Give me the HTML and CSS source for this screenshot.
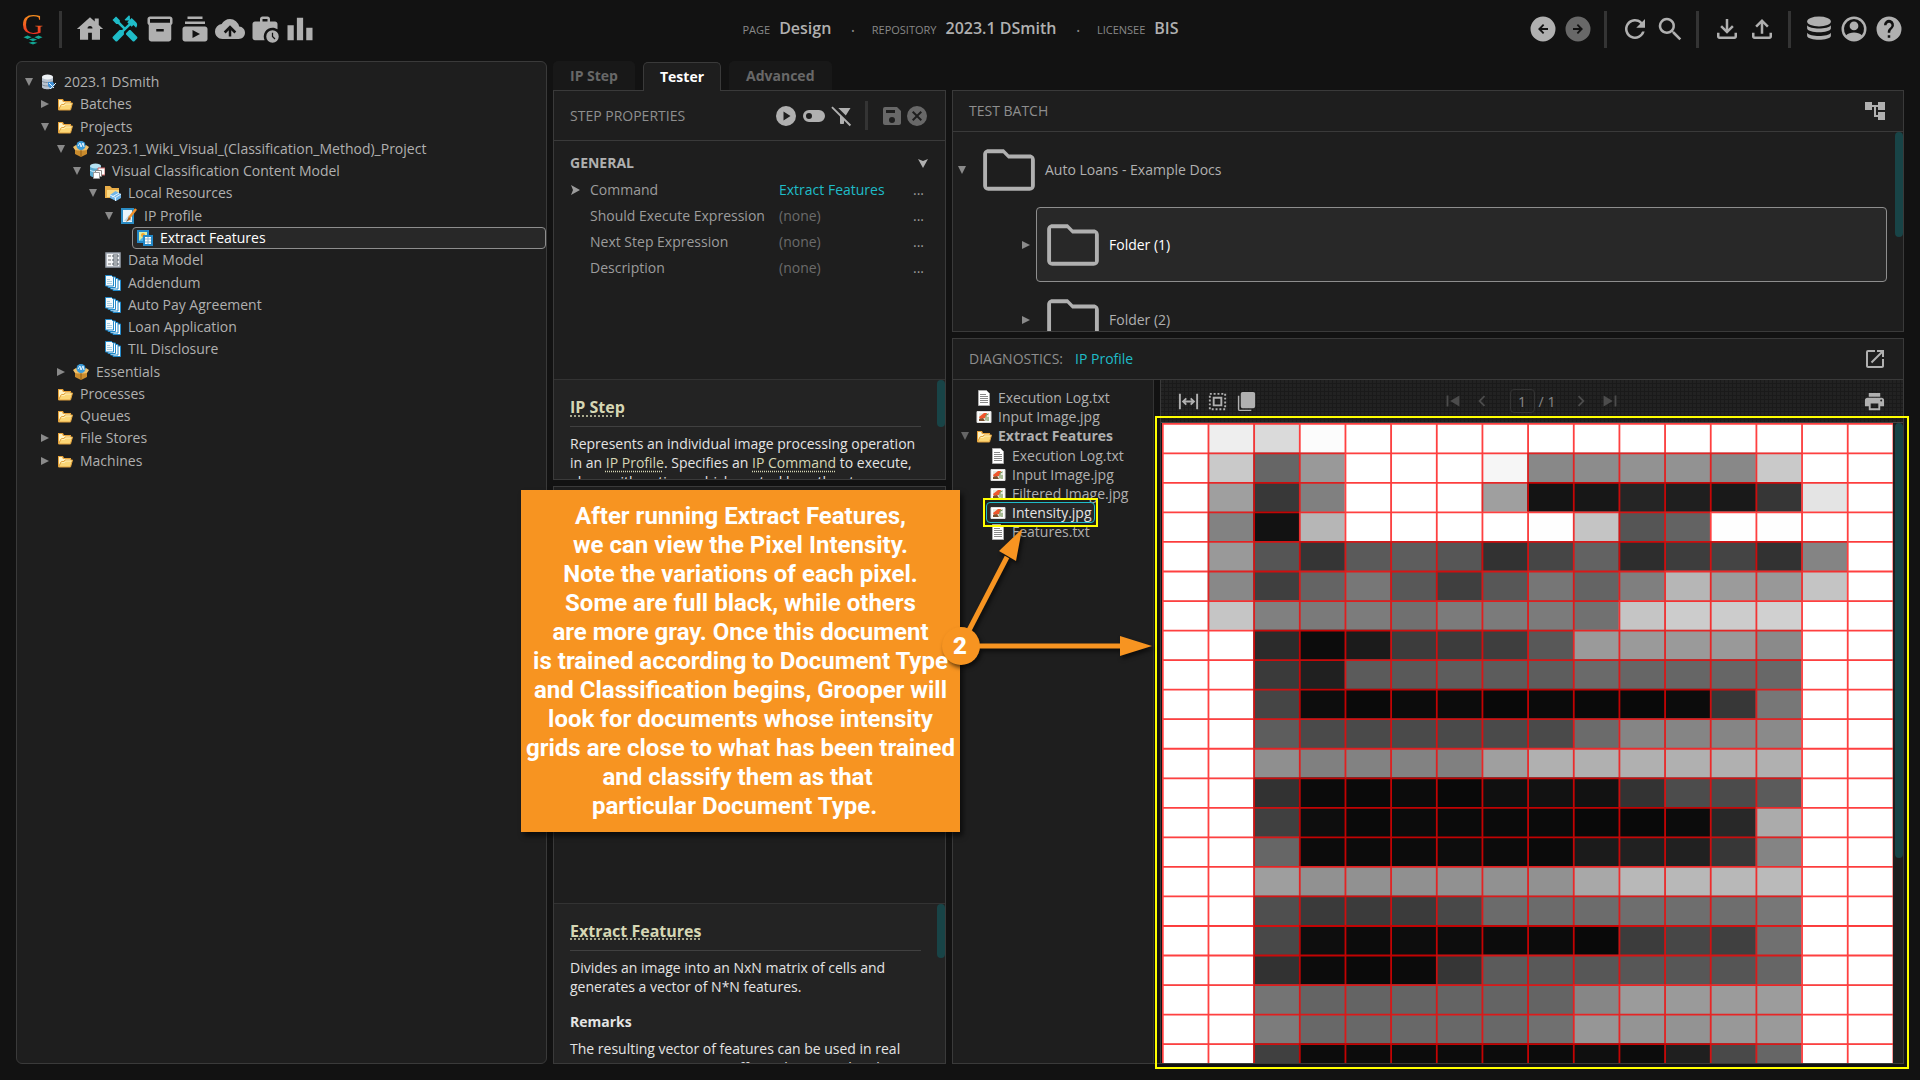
FILE: index.html
```html
<!DOCTYPE html>
<html lang="en">
<head>
<meta charset="utf-8">
<title>Grooper Design</title>
<link rel="stylesheet" href="styles.css">
</head>
<body>
<svg class="defs" aria-hidden="true">
  <defs>
    <linearGradient id="gold" x1="0" y1="0" x2="0" y2="1"><stop offset="0" stop-color="#fff0a8"/><stop offset="1" stop-color="#f5c04e"/></linearGradient>
    <symbol id="folder" viewBox="0 0 16 16"><path d="M1 14V3h5l1 2h7v3" fill="#e8a33a"/><path d="M2 4h3l1 2h7v2H5l-3 5z" fill="#fff3c4"/><path d="M1.500 14L4 9l3-.5 1-1.500h7.500l-2 7z" fill="#fbd676" stroke="#e0a03c"/><path d="M4.500 9.500h3l1-1.500h6" fill="none" stroke="#fff0b8"/></symbol>
    <symbol id="db" viewBox="0 0 16 16"><path d="M1 3v10c0 3 11 3 11 0V3" fill="#b9c3cf"/><ellipse cx="6.500" cy="3" rx="5.500" ry="2.500" fill="#eef2f6"/><path d="M1 7c1 2 10 2 11 0M1 10.500c1 2 10 2 11 0" stroke="#7c8a9a" fill="none"/><path d="M7 8l5 0 2 3-4 4-3-3z" fill="#3d8fd6"/><path d="M9 15l6-6M8 9l5 5" stroke="#e8f3fc"/></symbol>
    <symbol id="box" viewBox="0 0 16 16"><path d="M2 8l6 2 6-2v5l-6 3-6-3z" fill="#c98b2d"/><path d="M0 6l3-2 5 3 5-3 3 2-2 3-6 1-6-1z" fill="#f0c06a"/><path d="M8 9v7" stroke="#8d5a14"/><circle cx="8" cy="4.500" r="4.500" fill="#3b9bd8"/><path d="M5 5l2-3 1 4 2-4 1 4" stroke="#e9f6ff" fill="none"/></symbol>
    <symbol id="model" viewBox="0 0 16 16"><path d="M1 3v9c0 3 11 3 11 0V3" fill="#58a9cf"/><ellipse cx="6.500" cy="3" rx="5.500" ry="2.500" fill="#b5e2f3"/><path d="M1 7c1 2 10 2 11 0" stroke="#d9f2fb" fill="none"/><path d="M9 5h7v7H9z" fill="#fff" stroke="#c66"/><path d="M6.500 7.500h6v6h-6z" fill="#fff" stroke="#888"/><path d="M4.500 9.500h6v6h-6z" fill="#fff" stroke="#999"/></symbol>
    <symbol id="resources" viewBox="0 0 16 16"><path d="M0 13V1h5l2 2h7v10z" fill="#e9ad48"/><path d="M2 5h12v7H2z" fill="#fbd982"/><path d="M5 10l5.500-4L16 9v4l-5 3-6-3z" fill="#70b5e8"/><path d="M5 10l5.500 2.500L16 9M10.500 12.500V16M7 12l7-4" stroke="#e6f5ff" fill="none"/></symbol>
    <symbol id="profile" viewBox="0 0 16 16"><path d="M1 1h11v14H1z" fill="#e8f5fc" stroke="#2b8cc4" stroke-width="2"/><path d="M3 13l5-6 3 6z" fill="#b9d8ea"/><path d="M15 1L8 10" stroke="#f0902a" stroke-width="2.500"/><path d="M8 9l-3 5 5-3z" fill="#a35a1c"/></symbol>
    <symbol id="extract" viewBox="0 0 16 16"><path d="M1 1h10v11H1z" fill="#d8f0a8" stroke="#2389c9" stroke-width="2"/><circle cx="6" cy="5" r="2" fill="#f3a52c"/><path d="M2 11l4-4 3 4z" fill="#4bb3e3"/><path d="M7 6h8v9H7z" fill="#fff" stroke="#2389c9" stroke-width="2"/><path d="M8 9h6M8 12h6M11 7v7" stroke="#8db6cc"/></symbol>
    <symbol id="data" viewBox="0 0 16 16"><path d="M1 1h14v14H1z" fill="#f4f6f8" stroke="#9aa3ad" stroke-width="1.500"/><path d="M3 4h3M3 8h3M3 12h3" stroke="#777"/><path d="M8 3h5v2H8zM8 7h5v2H8zM8 11h5v2H8z" fill="#fff" stroke="#4d5661"/></symbol>
    <symbol id="docs" viewBox="0 0 16 16"><path d="M8 5h7.500v10.500H8z" fill="#fff" stroke="#2389c9"/><path d="M5.500 3.500h7.500V14H5.500z" fill="#fff" stroke="#2389c9"/><path d="M3 2h7.500v10.500H3z" fill="#fff" stroke="#2389c9"/><path d="M.500.500h6l2 2V11h-8z" fill="#f4fafd" stroke="#2389c9"/><path d="M2 4.500h3M2 6.500h5M2 8.500h5" stroke="#a9cfe2"/></symbol>
    <symbol id="text" viewBox="0 0 16 16"><path d="M2.500.500h8l3 3v12h-11z" fill="#fff" stroke="#aaa"/><path d="M4 4.500h6M4 6.500h8M4 8.500h8M4 10.500h8M4 12.500h8" stroke="#888"/></symbol>
    <symbol id="picture" viewBox="0 0 16 16"><path d="M1 2.500h14v11H1z" fill="#fff" stroke="#ddd"/><path d="M3 12V4h10v8z" fill="#e5e9df"/><path d="M3 8l5-4h3l-2 5-5 1z" fill="#f0562c"/><path d="M3 12v-2l4-1 2 3z" fill="#79502e"/><path d="M10 11.500V6l2.500-1M12 12V8" stroke="#6b8f4b" fill="none"/></symbol>
    <symbol id="bigfolder" viewBox="0 0 24 24"><path d="M20 6h-8l-2-2H4c-1.100 0-2 .9-2 2v12c0 1.100.9 2 2 2h16c1.100 0 2-.9 2-2V8c0-1.100-.9-2-2-2zm.5 12.500h-17v-13h6.200l2 2h8.800z"/></symbol>
    <symbol id="down" viewBox="0 0 10 10"><path d="M1 1h8L5 9z"/></symbol>
    <symbol id="right" viewBox="0 0 10 10"><path d="M1 1v8l8-4z"/></symbol>
  </defs>
</svg>

<header class="topbar">
  <nav class="tools" aria-label="Pages">
    <a class="logo" href="#" aria-label="Grooper"><span class="logo-letter">G</span><svg viewBox="0 0 22 10"><path d="M5 0l4.500 2L5 4 .5 2zM17 0l4.500 2L17 4l-4.500-2zM11 3l4.500 1.500L11 6.500 6.500 4.500zM11 7l5 1-5 2-5-2z" fill="#12a594"/></svg></a>
    <i class="bar"></i>
    <div class="group">
    <a href="#" aria-label="Home"><svg viewBox="0 0 24 24"><path d="M10.500 20.500v-5.500h3v5.500h6.500V12h2.500L19 8.700V3.500h-3.200v2.400L12 2.500 1.500 12H4v8.500zM10 11.500a2 2 0 0 1 4 0z"/></svg></a>
    <a class="active" href="#" aria-label="Design"><svg viewBox="0 0 24 24"><path d="M21.670 18.170l-5.300-5.300h-.99l-2.540 2.540v.99l5.300 5.300c.39.39 1.020.39 1.410 0l2.120-2.120c.39-.38.39-1.020 0-1.410zM17.340 10.190l1.410-1.410 2.120 2.120c1.170-1.170 1.170-3.070 0-4.240l-3.540-3.540-1.410 1.410V1.710L15.220 1l-3.540 3.540.71.71h2.830l-1.410 1.410 1.060 1.060-2.890 2.890-4.130-4.130V5.060L4.830 2.040 2 4.870 5.030 7.900h1.410l4.130 4.130-.85.850H7.600l-5.300 5.300c-.39.39-.39 1.020 0 1.410l2.120 2.120c.39.39 1.020.39 1.410 0l5.300-5.300v-2.120l5.150-5.150z"/></svg></a>
    <a href="#" aria-label="Batches"><svg viewBox="0 0 24 24"><path d="M20 2H4c-1 0-2 .9-2 2v3c0 .7.400 1.350 1 1.700V20c0 1.100 1.100 2 2 2h14c.9 0 2-.9 2-2V8.700c.6-.35 1-1 1-1.700V4c0-1.100-1-2-2-2zm-5 12H9v-2h6zm5-7H4V4h16z"/></svg></a>
    <a href="#" aria-label="Tasks"><svg viewBox="0 0 24 24"><path d="M20 8H4V6h16zm-2-6H6v2h12zm4 10v8c0 1.100-.9 2-2 2H4c-1.100 0-2-.9-2-2v-8c0-1.100.9-2 2-2h16c1.100 0 2 .9 2 2zm-6 4l-6-3.270v6.530z"/></svg></a>
    <a href="#" aria-label="Imports"><svg viewBox="0 0 24 24"><path d="M19.350 10.040A7.490 7.490 0 0 0 12 4C9.110 4 6.600 5.640 5.350 8.040A5.990 5.990 0 0 0 0 14c0 3.310 2.690 6 6 6h13c2.760 0 5-2.240 5-5 0-2.640-2.050-4.780-4.650-4.960zM13 13v5h-2v-5l-2.500 2.500L7 14l5-5 5 5-1.500 1.500z"/></svg></a>
    <a href="#" aria-label="Jobs"><svg viewBox="0 0 24 24"><path d="M18 11c1.490 0 2.870.47 4 1.260V8c0-1.110-.89-2-2-2h-4V4c0-1.110-.89-2-2-2h-4c-1.110 0-2 .89-2 2v2H4c-1.110 0-2 .89-2 2v11c0 1.110.89 2 2 2h7.680A7 7 0 0 1 18 11zm-8-7h4v2h-4z"/><path d="M18 13a5 5 0 1 0 0 10 5 5 0 0 0 0-10zm1.650 7.350L17.500 18.200V15h1v2.790l1.850 1.850z"/></svg></a>
    <a href="#" aria-label="Stats"><svg viewBox="0 0 24 24"><path d="M2 9h5v12H2zM9.500 3h5v18h-5zM17 11h5v10h-5z"/></svg></a>
    </div>
  </nav>
  <div class="crumbs">
    <span>PAGE</span><b>Design</b><em>•</em><span>REPOSITORY</span><b>2023.1 DSmith</b><em>•</em><span>LICENSEE</span><b>BIS</b>
  </div>
  <div class="tools tools-end">
    <div class="group">
    <button aria-label="Back"><svg viewBox="0 0 24 24"><path fill-rule="evenodd" d="M12 2a10 10 0 1 0 0 20 10 10 0 0 0 0-20zm0 6l1 1-2 2.200h5v1.600h-5L13 15l-1 1-4-4z"/></svg></button>
    <button class="dim" aria-label="Forward"><svg viewBox="0 0 24 24"><path fill-rule="evenodd" d="M12 2a10 10 0 1 0 0 20 10 10 0 0 0 0-20zm0 6l-1 1 2 2.200H8v1.600h5L11 15l1 1 4-4z"/></svg></button>
    </div><i class="bar"></i><div class="group">
    <button aria-label="Refresh"><svg viewBox="0 0 24 24"><path d="M17.650 6.350A8 8 0 1 0 19.730 14h-2.080A6 6 0 1 1 12 6c1.660 0 3.140.69 4.220 1.780L13 11h7V4z"/></svg></button>
    <button aria-label="Search"><svg viewBox="0 0 24 24"><path d="M15.500 14h-.79l-.28-.27A6.500 6.500 0 1 0 13.730 14.430l.27.28v.79l5.500 5.490L21 19.500zm-6 0a4.500 4.500 0 1 1 0-9 4.500 4.500 0 0 1 0 9z"/></svg></button>
    </div><i class="bar"></i><div class="group">
    <button aria-label="Download"><svg viewBox="0 0 24 24"><path d="M11 4h2v8l3-3 1.400 1.400L12 15.800l-5.400-5.400L8 9l3 3zM4 15h2v3h12v-3h2v3c0 1-.9 2-2 2H6c-1.100 0-2-1-2-2z"/></svg></button>
    <button aria-label="Upload"><svg viewBox="0 0 24 24"><path d="M11 15.800h2V7.800l3 3 1.400-1.400L12 4 6.600 9.400 8 10.800l3-3zM4 15h2v3h12v-3h2v3c0 1-.9 2-2 2H6c-1.100 0-2-1-2-2z"/></svg></button>
    </div><i class="bar"></i><div class="group">
    <button aria-label="Repository"><svg viewBox="0 0 24 24"><ellipse cx="12" cy="6" rx="9.500" ry="4"/><path d="M2.500 9c2 3.500 17 3.500 19 0v2.500c-1 4-18 4-19 0zM2.500 15c2 3.500 17 3.500 19 0v2.500c-1 4-18 4-19 0z"/></svg></button>
    <button aria-label="User"><svg viewBox="0 0 24 24"><path fill-rule="evenodd" d="M12 2a10 10 0 1 0 0 20 10 10 0 0 0 0-20zM5.700 17A8 8 0 1 1 18.300 17c-3-3-9.600-3-12.600 0zM12 6a3.500 3.500 0 1 1 0 7 3.500 3.500 0 0 1 0-7z"/></svg></button>
    <button aria-label="Help"><svg viewBox="0 0 24 24"><path d="M12 2a10 10 0 1 0 0 20 10 10 0 0 0 0-20zm1 17h-2v-2h2zm2.070-7.750l-.9.920C13.450 12.900 13 13.500 13 15h-2v-.5c0-1.100.45-2.100 1.170-2.830l1.240-1.260A2 2 0 1 0 10 9H8a4 4 0 1 1 7.070 2.250z"/></svg></button>
    </div>
  </div>
</header>

<main class="workspace">
  <section class="panel tree" aria-label="Nodes">
    <div class="node l0"><svg class="tri"><use href="#down"/></svg><svg class="ic"><use href="#db"/></svg>2023.1 DSmith</div>
    <div class="node l1"><svg class="tri"><use href="#right"/></svg><svg class="ic"><use href="#folder"/></svg>Batches</div>
    <div class="node l1"><svg class="tri"><use href="#down"/></svg><svg class="ic"><use href="#folder"/></svg>Projects</div>
    <div class="node l2"><svg class="tri"><use href="#down"/></svg><svg class="ic"><use href="#box"/></svg>2023.1_Wiki_Visual_(Classification_Method)_Project</div>
    <div class="node l3"><svg class="tri"><use href="#down"/></svg><svg class="ic"><use href="#model"/></svg>Visual Classification Content Model</div>
    <div class="node l4"><svg class="tri"><use href="#down"/></svg><svg class="ic"><use href="#resources"/></svg>Local Resources</div>
    <div class="node l5"><svg class="tri"><use href="#down"/></svg><svg class="ic"><use href="#profile"/></svg>IP Profile</div>
    <div class="node l6"><i class="tri"></i><span class="picked"><svg class="ic"><use href="#extract"/></svg>Extract Features</span></div>
    <div class="node l4"><i class="tri"></i><svg class="ic"><use href="#data"/></svg>Data Model</div>
    <div class="node l4"><i class="tri"></i><svg class="ic"><use href="#docs"/></svg>Addendum</div>
    <div class="node l4"><i class="tri"></i><svg class="ic"><use href="#docs"/></svg>Auto Pay Agreement</div>
    <div class="node l4"><i class="tri"></i><svg class="ic"><use href="#docs"/></svg>Loan Application</div>
    <div class="node l4"><i class="tri"></i><svg class="ic"><use href="#docs"/></svg>TIL Disclosure</div>
    <div class="node l2"><svg class="tri"><use href="#right"/></svg><svg class="ic"><use href="#box"/></svg>Essentials</div>
    <div class="node l1"><i class="tri"></i><svg class="ic"><use href="#folder"/></svg>Processes</div>
    <div class="node l1"><i class="tri"></i><svg class="ic"><use href="#folder"/></svg>Queues</div>
    <div class="node l1"><svg class="tri"><use href="#right"/></svg><svg class="ic"><use href="#folder"/></svg>File Stores</div>
    <div class="node l1"><svg class="tri"><use href="#right"/></svg><svg class="ic"><use href="#folder"/></svg>Machines</div>
  </section>

  <div class="column">
    <div class="tabs" role="tablist">
      <button role="tab">IP Step</button><button role="tab" class="on" aria-selected="true">Tester</button><button role="tab">Advanced</button>
    </div>
    <section class="panel step">
      <div class="panel-head step-head">
        <h2>STEP PROPERTIES</h2>
        <div class="small-tools">
          <button aria-label="Run"><svg viewBox="0 0 24 24"><path d="M12 2a10 10 0 1 0 0 20 10 10 0 0 0 0-20zm-2.500 14.500v-9l7 4.500z"/></svg></button>
          <button aria-label="Toggle"><svg viewBox="0 0 24 24"><path d="M17 6H7a6 6 0 0 0 0 12h10a6 6 0 0 0 0-12zM7 15a3 3 0 1 1 0-6 3 3 0 0 1 0 6z"/></svg></button>
          <button aria-label="Clear filter"><svg viewBox="0 0 24 24"><path d="M20.500 4H8.300l7.500 7.500zM2.600 2.500L1.300 3.800 10 12.500V19c0 .6.400 1 1 1h2c.6 0 1-.4 1-1v-2.500l5.700 5.700 1.400-1.400z"/></svg></button>
          <i class="bar"></i>
          <button class="dim" aria-label="Save"><svg viewBox="0 0 24 24"><path d="M17 3H5a2 2 0 0 0-2 2v14c0 1.100.9 2 2 2h14c1.100 0 2-.9 2-2V7zm-5 16a3 3 0 1 1 0-6 3 3 0 0 1 0 6zm3-10H6V6h9z"/></svg></button>
          <button class="dim" aria-label="Cancel"><svg viewBox="0 0 24 24"><path d="M12 2a10 10 0 1 0 0 20 10 10 0 0 0 0-20zm5 13.600L15.600 17 12 13.400 8.400 17 7 15.600l3.600-3.600L7 8.400 8.400 7l3.600 3.600L15.600 7 17 8.400 13.400 12z"/></svg></button>
        </div>
      </div>
      <div class="props">
        <div class="props-title">GENERAL<svg class="chev" viewBox="0 0 10 10"><path d="M0 1l5 2 5-2-5 9z"/></svg></div>
        <table>
          <tr><td class="mark"><svg class="chev" viewBox="0 0 10 10"><path d="M1 0l9 5-9 5 2-5z"/></svg></td><th scope="row">Command</th><td class="link">Extract Features</td><td class="more">...</td></tr>
          <tr><td class="mark"></td><th scope="row">Should Execute Expression</th><td>(none)</td><td class="more">...</td></tr>
          <tr><td class="mark"></td><th scope="row">Next Step Expression</th><td>(none)</td><td class="more">...</td></tr>
          <tr><td class="mark"></td><th scope="row">Description</th><td>(none)</td><td class="more">...</td></tr>
        </table>
      </div>
      <article class="help help-step">
        <h3><a href="#">IP Step</a></h3>
        <p>Represents an individual image processing operation in an <a href="#">IP Profile</a>. Specifies an <a href="#">IP Command</a> to execute, along with options which control how the step executes.</p>
        <i class="thumb"></i>
      </article>
    </section>
    <section class="panel command">
      <div class="blank"></div>
      <article class="help help-command">
        <h3><a href="#">Extract Features</a></h3>
        <p>Divides an image into an NxN matrix of cells and generates a vector of N*N features.</p>
        <h4>Remarks</h4>
        <p>The resulting vector of features can be used in real time to compare images efficiently, as used in the visual classification method.</p>
        <i class="thumb"></i>
      </article>
    </section>
    <aside class="callout">
      <svg class="arrows" viewBox="0 0 210 160"><g fill="#f79421"><path d="M20 117.500h150V110l32 10-32 10v-7.500H20z"/><path d="M15 112L57 31" stroke="#f79421" stroke-width="5"/><path d="M49 25L72 3l-6 32z"/><circle cx="11" cy="120" r="19"/></g></svg>
      <p>After running Extract Features,<br>we can view the Pixel Intensity.<br>Note the variations of each pixel.<br>Some are full black, while others<br>are more gray. Once this document<br>is trained according to Document Type<br>and Classification begins, Grooper will<br>look for documents whose intensity<br>grids are close to what has been trained<br>and classify them as that&nbsp;<br>particular Document Type.&nbsp;&nbsp;</p>
      <b class="number">2</b>
    </aside>
  </div>

  <div class="column results">
    <section class="panel batch">
      <div class="panel-head"><h2>TEST BATCH</h2><button aria-label="Tree view"><svg viewBox="0 0 24 24"><path d="M22 11V3h-7v3H9V3H2v8h7V8h2v10h4v3h7v-8h-7v3h-2V8h2v3z"/></svg></button></div>
      <div class="batch-list">
        <div class="batch-row"><svg class="tri"><use href="#down"/></svg><div class="batch-item"><svg><use href="#bigfolder"/></svg>Auto Loans - Example Docs</div></div>
        <div class="batch-row child"><svg class="tri"><use href="#right"/></svg><div class="batch-item chosen"><svg><use href="#bigfolder"/></svg>Folder (1)</div></div>
        <div class="batch-row child"><svg class="tri"><use href="#right"/></svg><div class="batch-item"><svg><use href="#bigfolder"/></svg>Folder (2)</div></div>
        <i class="thumb"></i>
      </div>
    </section>
    <section class="panel diagnostics">
      <div class="panel-head"><h2>DIAGNOSTICS:<a href="#">IP Profile</a></h2><button aria-label="Open in new window"><svg viewBox="0 0 24 24"><path d="M19 19H5V5h7V3H5a2 2 0 0 0-2 2v14c0 1.100.9 2 2 2h14c1.100 0 2-.9 2-2v-7h-2zM14 3v2h3.600l-9.800 9.800 1.400 1.400L19 6.400V10h2V3z"/></svg></button></div>
      <div class="diag-body">
        <div class="files">
          <div class="file"><svg class="ic"><use href="#text"/></svg>Execution Log.txt</div>
          <div class="file"><svg class="ic"><use href="#picture"/></svg>Input Image.jpg</div>
          <div class="file open"><svg class="tri"><use href="#down"/></svg><svg class="ic"><use href="#folder"/></svg>Extract Features</div>
          <div class="file sub"><svg class="ic"><use href="#text"/></svg>Execution Log.txt</div>
          <div class="file sub"><svg class="ic"><use href="#picture"/></svg>Input Image.jpg</div>
          <div class="file sub"><svg class="ic"><use href="#picture"/></svg>Filtered Image.jpg</div>
          <div class="file sub"><span class="file-picked"><svg class="ic"><use href="#picture"/></svg>Intensity.jpg</span></div>
          <div class="file sub"><svg class="ic"><use href="#text"/></svg>Features.txt</div>
        </div>
        <div class="viewer">
          <div class="viewer-bar">
            <div class="viewer-tools">
              <button aria-label="Fit width"><svg viewBox="0 0 24 24"><path d="M2 4h2v16H2zM20 4h2v16h-2zM5 12l4-4 1.400 1.400L8.800 11h6.400l-1.600-1.600L15 8l4 4-4 4-1.400-1.400 1.600-1.600H8.800l1.600 1.600L9 16z"/></svg></button>
              <button aria-label="Select"><svg viewBox="0 0 24 24"><path d="M4 4h16v16H4z" fill="none" stroke="currentColor" stroke-width="2" stroke-dasharray="2 2"/><path fill-rule="evenodd" d="M7 7h10v10H7zm2 2v6h6V9z"/></svg></button>
              <button aria-label="Pages"><svg viewBox="0 0 24 24"><path d="M8 2h11a2 2 0 0 1 2 2v13a2 2 0 0 1-2 2H8a2 2 0 0 1-2-2V4c0-1.100.9-2 2-2zM3 6h1.500v14.500H17V22H5a2 2 0 0 1-2-2z"/></svg></button>
            </div>
            <div class="pager">
              <button aria-label="First page"><svg viewBox="0 0 24 24"><path d="M5 6h2v12H5zM19 6v12l-10-6z"/></svg></button>
              <button aria-label="Previous page"><svg viewBox="0 0 24 24"><path d="M15.400 7.400L14 6l-6 6 6 6 1.400-1.400L10.800 12z"/></svg></button>
              <label><input type="text" value="1" aria-label="Page number">/ 1</label>
              <button aria-label="Next page"><svg viewBox="0 0 24 24"><path d="M8.600 16.600L10 18l6-6-6-6-1.400 1.400L13.200 12z"/></svg></button>
              <button aria-label="Last page"><svg viewBox="0 0 24 24"><path d="M17 6h2v12h-2zM5 6v12l10-6z"/></svg></button>
            </div>
            <button class="print" aria-label="Print"><svg viewBox="0 0 24 24"><path d="M19 8H5a3 3 0 0 0-3 3v6h4v4h12v-4h4v-6a3 3 0 0 0-3-3zm-3 11H8v-5h8zm3-7a1 1 0 1 1 0-2 1 1 0 0 1 0 2zM18 3H6v4h12z"/></svg></button>
          </div>
          <div class="page">
            <svg class="intensity" id="intensity" viewBox="0 0 7300 6490" role="img" aria-label="Pixel intensity"></svg>
            <div class="track"><i class="thumb"></i></div>
          </div>
          <div class="frame"></div>
        </div>
      </div>
    </section>
  </div>
</main>
<script src="grid.js"></script>
</body>
</html>
```
FILE: styles.css
```css
* { box-sizing: border-box; }

body {
  margin: 0;
  height: 100vh;
  display: flex;
  flex-direction: column;
  overflow: hidden;
  background: #121212;
  color: #b0b0b0;
  font: 14px/20px "Open Sans", sans-serif;
}

.defs { display: none; }
h2, h3, h4, p { margin: 0; }
svg { display: block; fill: currentColor; flex: none; }
a { color: inherit; text-decoration: none; }

button {
  padding: 0;
  border: 0;
  background: none;
  color: #b0b0b0;
  font: inherit;
}

.dim { color: #686868; }

/* Top bar */
.topbar {
  flex: none;
  height: 61px;
  padding: 0 16px 3px 17px;
  display: grid;
  grid-template-columns: 1fr auto 1fr;
  align-items: center;
}

.tools, .group { display: flex; align-items: center; }
.group { gap: 5px; }
.tools-end { justify-content: flex-end; }
.tools .group svg { width: 30px; height: 30px; }
.active { color: #1fbcc8; }

.bar { width: 3px; height: 37px; margin: 0 13px 0 11px; background: #343434; }

.logo { width: 31px; display: flex; flex-direction: column; align-items: center; }
.logo svg { width: 20px; height: 10px; }
.logo-letter {
  font: 30px/22px "Liberation Serif", serif;
  background: linear-gradient(#f79a1e, #ee2a24);
  background-clip: text;
  color: transparent;
}

.crumbs { display: flex; align-items: baseline; }
.crumbs span { font-size: 11px; color: #888; }
.crumbs b { margin-left: 9px; font-size: 16px; font-weight: 600; }
.crumbs em { margin: 0 17px 0 20px; font-size: 9px; font-style: normal; color: #888; }

/* Workspace */
.workspace {
  flex: 1;
  min-height: 0;
  padding: 0 16px 16px 16px;
  display: grid;
  grid-template-columns: 531fr 393fr 952fr;
  grid-template-rows: minmax(0, 1fr);
  gap: 6px;
}

.panel { background: #1e1e1e; border: 1px solid #3a3a3a; }
.column { position: relative; min-width: 0; display: flex; flex-direction: column; gap: 6px; }

.panel-head {
  flex: none;
  height: 41px;
  padding: 0 16px;
  display: flex;
  align-items: center;
  justify-content: space-between;
  border-bottom: 1px solid #3a3a3a;
}
.panel-head h2 { font-size: 14px; font-weight: 400; color: #8e8e8e; }
.panel-head h2 a { margin-left: 12px; color: #1fbcc8; }
.panel-head button svg { width: 24px; height: 24px; }

.tri { width: 10px; height: 10px; flex: none; color: #8a8a8a; }
.ic { width: 16px; height: 16px; }

/* Node tree */
.tree {
  padding-top: 9px;
  border-radius: 6px;
  display: grid;
  grid-template-rows: repeat(18, minmax(20px, 2.245%));
}
.node { display: flex; align-items: center; gap: 7px; white-space: nowrap; }
.l0 { padding-left: 7px; }
.l1 { padding-left: 23px; }
.l2 { padding-left: 39px; }
.l3 { padding-left: 55px; }
.l4 { padding-left: 71px; }
.l5 { padding-left: 87px; }
.l6 { padding-left: 98px; }
.picked {
  flex: 1;
  height: 22px;
  padding-left: 4px;
  display: flex;
  align-items: center;
  gap: 7px;
  background: #282828;
  border: 1px solid #8e8e8e;
  border-radius: 4px;
  color: #fff;
}

/* Tabs */
.tabs { height: 29px; margin-bottom: -6px; display: flex; gap: 8px; align-items: flex-end; z-index: 1; }
.tabs button {
  height: 29px;
  padding: 0 17px;
  border-radius: 5px 5px 0 0;
  background: #181818;
  color: #686868;
  font-weight: 700;
}
.tabs .on {
  padding: 0 16px;
  margin-bottom: -1px;
  background: #1e1e1e;
  border: 1px solid #3a3a3a;
  border-bottom: 0;
  color: #fff;
}

/* Step and command panels */
.step { flex: 390 0 0; min-height: 0; display: flex; flex-direction: column; }
.command { flex: 578 0 0; min-height: 0; display: flex; flex-direction: column; }
.step-head { height: 50px; }
.small-tools { display: flex; align-items: center; gap: 4px; }
.small-tools .bar { height: 29px; margin: 0 8px 0 7px; }
.small-tools .dim + .dim { margin-left: -3px; }

.props { flex: 1; padding: 11px 16px; }
.props-title { margin-bottom: 3px; display: flex; align-items: center; justify-content: space-between; font-weight: 700; line-height: 22px; }
.chev { width: 10px; height: 10px; }
.props-title .chev { margin-right: 1px; }
.props table { width: 100%; border-collapse: collapse; table-layout: fixed; }
.props td, .props th { height: 26px; padding: 0; text-align: left; font-weight: 400; color: #6b6b6b; white-space: nowrap; }
.props th { width: 189px; color: #9c9c9c; }
.props .mark { width: 20px; color: #9c9c9c; }
.props .more { width: 16px; color: #9c9c9c; }
.props .link { color: #1fbcc8; }

.help {
  position: relative;
  padding: 16px 24px 0 16px;
  overflow: hidden;
  background: #232323;
  border-top: 1px solid #333;
  color: #e4e4e4;
  line-height: 19px;
}
.help-step { height: 100px; }
.help-command { height: 160px; }
.blank { flex: 1; }
.help h3 { padding-bottom: 8px; margin-bottom: 7px; border-bottom: 1px solid #404040; font-size: 16px; line-height: 22px; font-weight: 700; }
.help h4 { margin: 16px 0 8px; font-weight: 700; }
.help a { color: #d6d7b4; text-decoration: underline dotted; text-underline-offset: 2px; }

.thumb { position: absolute; top: 0; right: 0; width: 8px; border-radius: 4px; background: #184447; }
.help-step .thumb { height: 47px; }
.help-command .thumb { height: 54px; }

/* Callout laid over the columns */
.callout {
  position: absolute;
  z-index: 3;
  left: -32px;
  top: 429px;
  width: 439px;
  height: 342px;
  padding-top: 12px;
  background: #f79421;
  box-shadow: 3px 4px 5px #0009;
  color: #fff;
  text-align: center;
  white-space: nowrap;
  font: 700 24px/29px Roboto, sans-serif;
}
.callout p { position: relative; }
.arrows { position: absolute; left: 429px; top: 36px; width: 210px; height: 160px; overflow: visible; filter: drop-shadow(2px 3px 2px #0009); }
.number { position: absolute; left: 432px; top: 142px; }

/* Test batch */
.results { padding-top: 29px; }
.batch { flex: 241 0 0; min-height: 0; display: flex; flex-direction: column; }
.batch-list { position: relative; flex: 1; min-height: 0; overflow: hidden; padding: 0 16px 0 4px; }
.batch-row { height: 75px; display: flex; align-items: center; gap: 5px; }
.child { padding-left: 64px; }
.batch-item { flex: 1; height: 75px; padding-left: 5px; display: flex; align-items: center; gap: 5px; border: 1px solid transparent; border-radius: 4px; }
.batch-item svg { width: 62px; height: 62px; color: #b0b0b0; }
.chosen { background: #282828; border-color: #8e8e8e; color: #fff; }
.batch .thumb { height: 105px; }

/* Diagnostics */
.diagnostics { flex: 727 0 0; min-height: 0; display: flex; flex-direction: column; }
.diag-body { flex: 1; min-height: 0; display: flex; gap: 6px; background: #121212; }
.files { width: 201px; flex: none; padding: 8px 0 0 23px; background: #1e1e1e; border-right: 1px solid #333; }
.file { height: 19px; display: flex; align-items: center; gap: 6px; white-space: nowrap; }
.file.open { height: 20px; margin-left: -16px; font-weight: 700; }
.file.open .tri { color: #666; }
.sub { margin-left: 14px; }
.file-picked { position: relative; height: 21px; margin-left: -4px; padding: 0 2px 0 3px; display: flex; align-items: center; gap: 6px; border: 1px solid #1fbcc8; border-radius: 4px; background: #282828; color: #e4e4e4; }
.file-picked::after { content: ""; position: absolute; inset: -5px -4px; border: 2px solid #ff0; }

.viewer { position: relative; flex: 1; min-width: 0; display: flex; flex-direction: column; border-left: 1px solid #3a3a3a; }
.viewer-bar {
  height: 43px;
  flex: none;
  padding: 0 17px 0 16px;
  display: grid;
  grid-template-columns: 1fr auto 1fr;
  align-items: center;
  background: repeating-linear-gradient(#0000 0 3px, #1a1a1a 3px 4px), repeating-linear-gradient(90deg, #222 0 3px, #1a1a1a 3px 4px);
  border-bottom: 1px solid #444;
}
.viewer-tools, .pager { display: flex; align-items: center; gap: 6px; }
.viewer-bar svg { width: 23px; height: 23px; }
.pager { gap: 7px; color: #888; }
.pager button { color: #4c4c4c; }
.pager svg { width: 22px; height: 22px; }
.pager label { margin: 0 8px 0 10px; }
.pager input { width: 25px; height: 24px; margin-right: 4px; padding: 0; border: 1px solid #333; border-radius: 4px; background: none; color: #888; font: inherit; text-align: center; }
.print { justify-self: end; }
.page { flex: 1; min-height: 0; display: flex; overflow: hidden; padding-left: 1px; }
.intensity { flex: 1; min-width: 0; align-self: flex-start; }
.track { position: relative; width: 10px; background: #1e1e1e; }
.track .thumb { height: 68%; }
.frame { position: absolute; inset: 36px -6px -6px -6px; border: 2px solid #ff0; }
```
FILE: grid.js
```js
// Gray level of each cell, two hex digits per cell, sixteen cells per row.
const rows = [
  "ffeedafcffffffffffffffffffffffff",
  "ffc96699fffffff6888c929288c9ffff",
  "ff9f3880ffffff9f1417251f1936e4ff",
  "ff8212b6fffffffffec45563fefeffff",
  "ff9955355a5d563246622d3d443284ff",
  "ff883f6477583f5776647fb69b98c4ff",
  "ffc5807a7c707b7b7b71c5ccccd0ffff",
  "ffff2b0c1b3c3c3e589a9a9a998affff",
  "ffff3a205b595d5c5d6a66666668ffff",
  "ffff450d0a0c0c090b0a090c3777ffff",
  "ffff5d4a4a4a4a4a4a6b8585858affff",
  "ffff8f808282809fb0b0b0b0b0b0ffff",
  "ffff320b0a0c09101212334c4b5bffff",
  "ffff400e0a0c0b0b0b09090c28abffff",
  "ffff660c0c0c0d0c0b1b21213784ffff",
  "ffff9e919190919191a8b8b8b8baffff",
  "ffff4f3a3b3b486b6b6c6e6e6e77ffff",
  "ffff480e0c0d0d0c0c093c474070ffff",
  "ffff320c0a0b365b595757575566ffff",
  "ffff7464646464646486 9b9a9b9cffff",
  "ffff7c6868686868709694939 89affff",
  "ffff400c0c0c0c0c0c0f0c1f4966ffff"
].map(row => row.replace(/\s/g, ""));
const W = 456, H = 295;
let cells = "";
rows.forEach((row, y) => {
  for (let x = 0; x < 16; x++) {
    const g = row.slice(x * 2, x * 2 + 2);
    cells += `<rect x="${x * W}" y="${y * H}" width="${W + 4}" height="${H + 4}" fill="#${g}${g}${g}"/>`;
  }
});
let lines = "";
for (let x = 0; x <= 16; x++) lines += `M${x * W + 8} 0V${rows.length * H}`;
for (let y = 0; y <= rows.length; y++) lines += `M0 ${y * H + 8}H7300`;
document.getElementById("intensity").innerHTML =
  cells + `<path d="${lines}" fill="none" stroke="#ff0000" stroke-opacity=".75" stroke-width="18"/>`;
```
